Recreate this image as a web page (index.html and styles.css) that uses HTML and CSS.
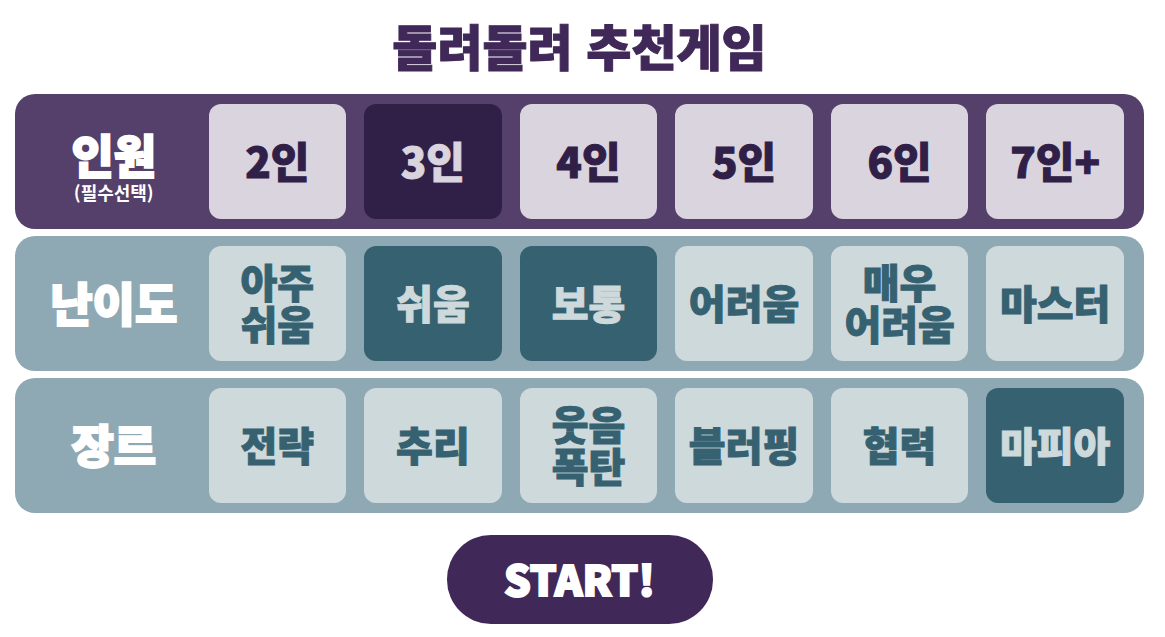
FILE: index.html
```html
<!DOCTYPE html>
<html lang="ko">
<head>
<meta charset="utf-8">
<meta name="viewport" content="width=device-width, initial-scale=1">
<title>돌려돌려 추천게임</title>
<link rel="stylesheet" href="styles.css">
</head>
<body>
<form class="picker">
<h1 class="title">돌려돌려 추천게임</h1>
<fieldset class="row row-players" aria-labelledby="players">
<div class="row-label" id="players">인원<small class="note">(필수선택)</small></div>
<button type="button" class="option" aria-pressed="false">2인</button>
<button type="button" class="option" aria-pressed="true">3인</button>
<button type="button" class="option" aria-pressed="false">4인</button>
<button type="button" class="option" aria-pressed="false">5인</button>
<button type="button" class="option" aria-pressed="false">6인</button>
<button type="button" class="option" aria-pressed="false">7인+</button>
</fieldset>
<fieldset class="row" aria-labelledby="level">
<div class="row-label" id="level">난이도</div>
<button type="button" class="option" aria-pressed="false">아주<br>쉬움</button>
<button type="button" class="option" aria-pressed="true">쉬움</button>
<button type="button" class="option" aria-pressed="true">보통</button>
<button type="button" class="option" aria-pressed="false">어려움</button>
<button type="button" class="option" aria-pressed="false">매우<br>어려움</button>
<button type="button" class="option" aria-pressed="false">마스터</button>
</fieldset>
<fieldset class="row" aria-labelledby="genre">
<div class="row-label" id="genre">장르</div>
<button type="button" class="option" aria-pressed="false">전략</button>
<button type="button" class="option" aria-pressed="false">추리</button>
<button type="button" class="option" aria-pressed="false">웃음<br>폭탄</button>
<button type="button" class="option" aria-pressed="false">블러핑</button>
<button type="button" class="option" aria-pressed="false">협력</button>
<button type="button" class="option" aria-pressed="true">마피아</button>
</fieldset>
<button type="submit" class="start">START!</button>
</form>
</body>
</html>
```
FILE: styles.css
```css
* {
  box-sizing: border-box;
}

body {
  margin: 0;
  background: #fff;
  font-family: "Noto Sans CJK KR", sans-serif;
  font-weight: 900;
}

.picker {
  display: flex;
  flex-direction: column;
  gap: 7px;
  padding: 12px 21px 12px 15px;
}

.title {
  margin: 0 0 9px;
  color: #402858;
  font-size: 49px;
  font-weight: 900;
  line-height: 66px;
  text-align: center;
  -webkit-text-stroke: 1px currentColor;
}

.row {
  --option-bg: #ced9dc;
  --option-ink: #366171;
  display: grid;
  grid-template-columns: 154fr repeat(6, 138fr);
  gap: 18px;
  min-width: 0;
  margin: 0;
  padding: 10px 20px 10px 22px;
  border: 0;
  border-radius: 20px;
  background: #8fa9b4;
}

.row-players {
  --option-bg: #dad4df;
  --option-ink: #302047;
  background: #54406a;
}

.row-label {
  display: flex;
  flex-direction: column;
  align-items: center;
  justify-content: center;
  padding-bottom: 6px;
  color: #fff;
  font-size: 46px;
  line-height: 46px;
  -webkit-text-stroke: 2px currentColor;
}

.row-players .row-label {
  padding: 10px 0 0;
}

.note {
  margin-top: 4px;
  font-size: 18px;
  font-weight: 700;
  line-height: 24px;
  -webkit-text-stroke: 0;
}

.option {
  min-width: 0;
  min-height: 115px;
  padding: 0 0 4px;
  border: 0;
  border-radius: 12px;
  background: var(--option-bg);
  color: var(--option-ink);
  font: inherit;
  font-size: 40px;
  line-height: 42px;
  -webkit-text-stroke: 1px currentColor;
}

.row-players .option {
  font-size: 42px;
}

.option[aria-pressed="true"] {
  background: var(--option-ink);
  color: var(--option-bg);
}

.start {
  align-self: center;
  width: 266px;
  height: 89px;
  margin-top: 15px;
  padding: 0 0 4px;
  border: 0;
  border-radius: 44px;
  background: #402858;
  color: #fff;
  font: inherit;
  font-size: 42px;
  -webkit-text-stroke: 2px currentColor;
}
```
